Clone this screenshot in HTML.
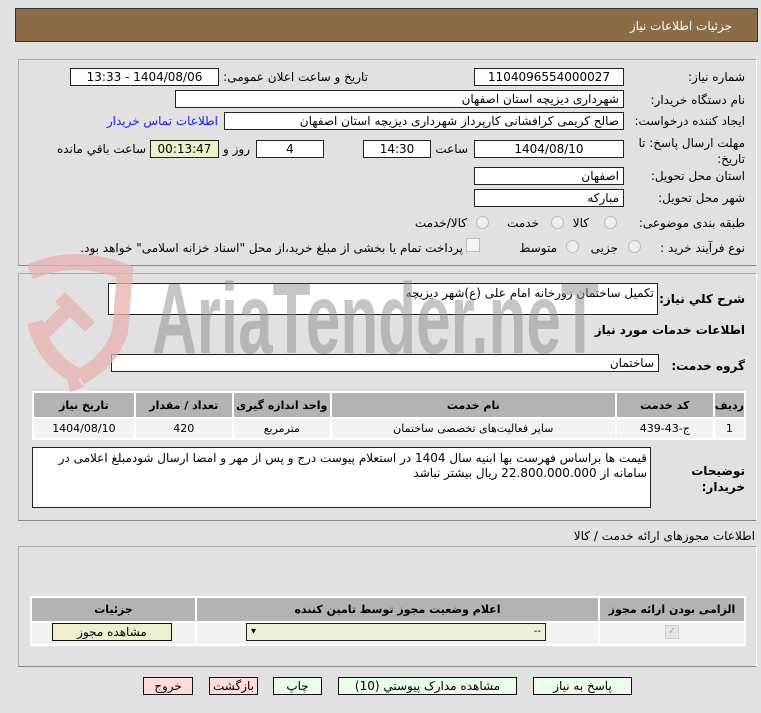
<!DOCTYPE html>
<html><head><meta charset="utf-8"><style>
body{margin:0;width:761px;height:713px;background:#e1e1e1;font-family:"DejaVu Sans","Liberation Sans",sans-serif;font-size:12px;color:#000;position:relative;overflow:hidden;direction:rtl}
.a{position:absolute}
.hdr{left:15px;top:8px;width:743px;height:34px;background:#8b6c47;border:1px solid #333;color:#fff;box-sizing:border-box}
.hdr span{position:absolute;right:25px;top:10px;font-size:12px}
.pn{border:1px solid #aaa;border-right-color:#fff;border-bottom-color:#888;box-sizing:border-box}
.in{background:#fff;border:1px solid #222;box-sizing:border-box;height:18px;line-height:16px;padding:0 4px;white-space:nowrap;overflow:hidden}
.c{text-align:center}
.l{white-space:nowrap;line-height:16px}
.rad{width:13px;height:13px;border-radius:50%;border:1px solid #bbb;background:#eee;box-sizing:border-box}
table{border-collapse:separate;border-spacing:2px;background:#fff}
td,th{padding:0;text-align:center;font-size:11px}
th{background:#b3b3b3;font-weight:bold}
td{background:#f2f2f2}
.btn{border:1px solid #111;box-sizing:border-box;height:18px;line-height:16px;text-align:center;background:#eaffea}
.red{background:#ffdcdc}
.wm{z-index:5;pointer-events:none}
</style></head><body>
<div class="a wm" style="left:152px;top:269px;font-family:'Liberation Sans',sans-serif;font-weight:bold;font-size:100px;color:rgba(140,140,140,0.5);direction:ltr;letter-spacing:0px;transform:scaleX(0.62);transform-origin:left;line-height:100px;white-space:nowrap">AriaTender.neT</div>
<svg class="a wm" style="left:20px;top:252px;opacity:0.75" width="115" height="140" viewBox="0 0 115 140"><path d="M10 20 Q55 0 105 20 L100 80 Q90 110 60 125" fill="none" stroke="#e8b0b0" stroke-width="16"/><path d="M60 125 Q25 110 15 70" fill="none" stroke="#e8b0b0" stroke-width="16"/><path d="M40 45 L70 75 M50 55 L25 80" stroke="#e8b0b0" stroke-width="14"/><path d="M45 115 L65 135 L50 140Z" fill="#e8b0b0"/></svg>

<div class="a hdr"><span>جزئیات اطلاعات نیاز</span></div>

<div class="a pn" style="left:18px;top:59px;width:739px;height:207px"></div>
<div class="a l" style="right:16px;top:69px">شماره نیاز:</div>
<div class="a in c" style="left:474px;top:68px;width:150px">1104096554000027</div>
<div class="a l" style="right:393px;top:69px">تاریخ و ساعت اعلان عمومی:</div>
<div class="a in c" style="left:70px;top:68px;width:149px">1404/08/06 - 13:33</div>
<div class="a l" style="right:16px;top:92px">نام دستگاه خریدار:</div>
<div class="a in" style="left:175px;top:90px;width:449px">شهرداری دیزیچه استان اصفهان</div>
<div class="a l" style="right:16px;top:113px">ایجاد کننده درخواست:</div>
<div class="a in" style="left:224px;top:112px;width:400px">صالح کریمی کرافشانی کارپرداز شهرداری دیزیچه استان اصفهان</div>
<div class="a l" style="right:543px;top:113px;color:#1a1aff">اطلاعات تماس خریدار</div>
<div class="a l" style="right:16px;top:135px;width:110px;text-align:right;white-space:normal">مهلت ارسال پاسخ: تا تاریخ:</div>
<div class="a in c" style="left:474px;top:140px;width:150px">1404/08/10</div>
<div class="a l" style="right:293px;top:141px">ساعت</div>
<div class="a in c" style="left:363px;top:140px;width:68px">14:30</div>
<div class="a in c" style="left:256px;top:140px;width:68px">4</div>
<div class="a l" style="right:511px;top:141px">روز و</div>
<div class="a in c" style="left:150px;top:140px;width:69px;background:#f0f0c8">00:13:47</div>
<div class="a l" style="right:615px;top:141px">ساعت باقي مانده</div>
<div class="a l" style="right:16px;top:168px">استان محل تحویل:</div>
<div class="a in" style="left:474px;top:167px;width:150px">اصفهان</div>
<div class="a l" style="right:16px;top:190px">شهر محل تحویل:</div>
<div class="a in" style="left:474px;top:189px;width:150px">مبارکه</div>
<div class="a l" style="right:16px;top:215px">طبقه بندی موضوعی:</div>
<div class="a rad" style="left:604px;top:216px"></div><div class="a l" style="right:172px;top:215px">کالا</div>
<div class="a rad" style="left:551px;top:216px"></div><div class="a l" style="right:222px;top:215px">خدمت</div>
<div class="a rad" style="left:476px;top:216px"></div><div class="a l" style="right:294px;top:215px">کالا/خدمت</div>
<div class="a l" style="right:16px;top:240px">نوع فرآیند خرید :</div>
<div class="a rad" style="left:628px;top:240px"></div><div class="a l" style="right:143px;top:240px">جزیی</div>
<div class="a rad" style="left:566px;top:240px"></div><div class="a l" style="right:204px;top:240px">متوسط</div>
<div class="a" style="left:466px;top:238px;width:12px;height:12px;border:1px solid #bbb;background:#f4f4f4"></div>
<div class="a l" style="right:298px;top:240px">پرداخت تمام یا بخشی از مبلغ خرید،از محل "اسناد خزانه اسلامی" خواهد بود.</div>

<div class="a pn" style="left:18px;top:273px;width:739px;height:248px"></div>
<div class="a l" style="right:16px;top:291px;font-weight:bold">شرح کلي نیاز:</div>
<div class="a in" style="left:108px;top:283px;width:550px;height:32px;line-height:18px;padding-right:3px">تکمیل ساختمان زورخانه امام علی (ع)شهر دیزیچه</div>
<div class="a l" style="right:16px;top:322px;font-weight:bold">اطلاعات خدمات مورد نیاز</div>
<div class="a l" style="right:16px;top:358px;font-weight:bold">گروه خدمت:</div>
<div class="a in" style="left:111px;top:354px;width:548px">ساختمان</div>
<table class="a" style="left:32px;top:391px;width:714px">
<tr style="height:24px"><th style="width:29px">ردیف</th><th style="width:96px">کد خدمت</th><th style="width:283px">نام خدمت</th><th style="width:96px">واحد اندازه گیری</th><th style="width:96px">تعداد / مقدار</th><th>تاریخ نیاز</th></tr>
<tr style="height:19px"><td>1</td><td>ج-43-439</td><td>سایر فعالیت‌های تخصصی ساختمان</td><td>مترمربع</td><td>420</td><td>1404/08/10</td></tr>
</table>
<div class="a l" style="right:16px;top:463px;font-weight:bold;width:70px;white-space:normal;text-align:right">توضیحات خریدار:</div>
<div class="a in" style="left:32px;top:447px;width:619px;height:61px;white-space:normal;line-height:15px;padding:3px 3px">قیمت ها براساس فهرست بها ابنیه سال 1404 در استعلام پیوست درج و پس از مهر و امضا ارسال شودمبلغ اعلامی در سامانه از 22.800.000.000 ریال بیشتر نباشد</div>

<div class="a l" style="right:6px;top:528px">اطلاعات مجوزهای ارائه خدمت / کالا</div>
<div class="a pn" style="left:18px;top:546px;width:739px;height:121px"></div>
<table class="a" style="left:30px;top:596px;width:716px;background:#fff">
<tr style="height:23px"><th style="width:144px">الزامی بودن ارائه مجوز</th><th style="width:401px">اعلام وضعیت مجوز توسط تامین کننده</th><th>جزئیات</th></tr>
<tr style="height:21px"><td></td><td></td><td></td></tr>
</table>
<div class="a btn" style="left:52px;top:623px;width:120px;background:#efefd0">مشاهده مجوز</div>
<div class="a in" style="left:246px;top:623px;width:300px;background:#f0f0d8;text-align:left;direction:ltr;font-size:10px">▾<span style="float:right">--</span></div>
<div class="a" style="left:665px;top:625px;width:12px;height:12px;border:1px solid #ccc;background:#e6e6e6;color:#aaa;font-size:10px;line-height:12px;text-align:center">✓</div>

<div class="a btn" style="left:533px;top:677px;width:99px">پاسخ به نیاز</div>
<div class="a btn" style="left:338px;top:677px;width:179px">مشاهده مدارک پیوستي (10)</div>
<div class="a btn" style="left:273px;top:677px;width:49px">چاپ</div>
<div class="a btn red" style="left:209px;top:677px;width:49px">بازگشت</div>
<div class="a btn red" style="left:143px;top:677px;width:50px">خروج</div>
</body></html>
